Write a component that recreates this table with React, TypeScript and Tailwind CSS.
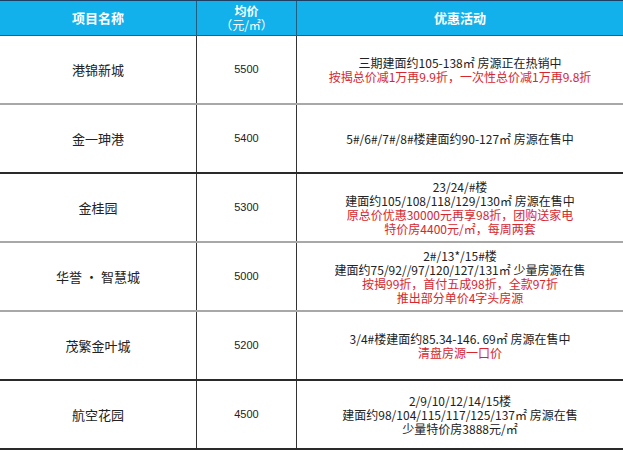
import React from "react";

type Row = {
  name: string;
  price: string;
  black: string[];
  red: string[];
  border: string;
};

const rows: Row[] = [
  {
    name: "港锦新城",
    price: "5500",
    black: ["三期建面约105-138㎡ 房源正在热销中"],
    red: ["按揭总价减1万再9.9折，一次性总价减1万再9.8折"],
    border: "border-b-2 border-[#a8a8a8]",
  },
  {
    name: "金一珅港",
    price: "5400",
    black: ["5#/6#/7#/8#楼建面约90-127㎡ 房源在售中"],
    red: [],
    border: "border-b-2 border-[#2a2a2a]",
  },
  {
    name: "金桂园",
    price: "5300",
    black: ["23/24/#楼", "建面约105/108/118/129/130㎡ 房源在售中"],
    red: ["原总价优惠30000元再享98折，团购送家电", "特价房4400元/㎡，每周两套"],
    border: "border-b-2 border-[#a8a8a8]",
  },
  {
    name: "华誉 · 智慧城",
    price: "5000",
    black: ["2#/13*/15#楼", "建面约75/92//97/120/127/131㎡ 少量房源在售"],
    red: ["按揭99折，首付五成98折，全款97折", "推出部分单价4字头房源"],
    border: "border-b-2 border-[#a8a8a8]",
  },
  {
    name: "茂繁金叶城",
    price: "5200",
    black: ["3/4#楼建面约85.34-146. 69㎡ 房源在售中"],
    red: ["清盘房源一口价"],
    border: "border-b-2 border-[#2a2a2a]",
  },
  {
    name: "航空花园",
    price: "4500",
    black: [
      "2/9/10/12/14/15楼",
      "建面约98/104/115/117/125/137㎡ 房源在售",
      "少量特价房3888元/㎡",
    ],
    red: [],
    border: "border-b-2 border-[#2a2a2a]",
  },
];

export default function App() {
  return (
    <div
      className="w-[623px] h-[453px] bg-white overflow-hidden"
      style={{ fontFamily: '"Noto Sans CJK SC", "Liberation Sans", sans-serif' }}
    >
      <div className="grid grid-cols-[197px_100px_1fr] h-[36px] bg-[#13b1ec] border-t border-[#1d3f63] border-b border-b-[#2b5f78] text-white font-bold">
        <div className="flex items-center justify-center border-r border-[#1f5f80] text-[13px]">
          项目名称
        </div>
        <div className="flex items-center justify-center border-r border-[#1f5f80] text-[12px] leading-[14px] text-center">
          <p>
            均价
            <br />
            <span className="font-normal">（元/㎡）</span>
          </p>
        </div>
        <div className="flex items-center justify-center text-[13px]">优惠活动</div>
      </div>
      {rows.map((r, i) => (
        <div
          key={i}
          className={`grid grid-cols-[197px_100px_1fr] h-[69px] ${r.border}`}
        >
          <div className="flex items-center justify-center border-r border-[#333] text-[13px] text-[#222]">
            {r.name}
          </div>
          <div
            className="flex items-center justify-center border-r border-[#333] text-[11px] text-[#222]"
            style={{ fontFamily: '"Liberation Sans", sans-serif' }}
          >
            {r.price}
          </div>
          <div className="flex items-center justify-center text-[12px] leading-[14px] whitespace-nowrap text-center">
            <p className="text-[#222]">
              {r.black.map((t, j) => (
                <React.Fragment key={"b" + j}>
                  {j > 0 && <br />}
                  {t}
                </React.Fragment>
              ))}
              {r.red.map((t, j) => (
                <React.Fragment key={"r" + j}>
                  <br />
                  <span className="text-[#d8262e]">{t}</span>
                </React.Fragment>
              ))}
            </p>
          </div>
        </div>
      ))}
    </div>
  );
}
